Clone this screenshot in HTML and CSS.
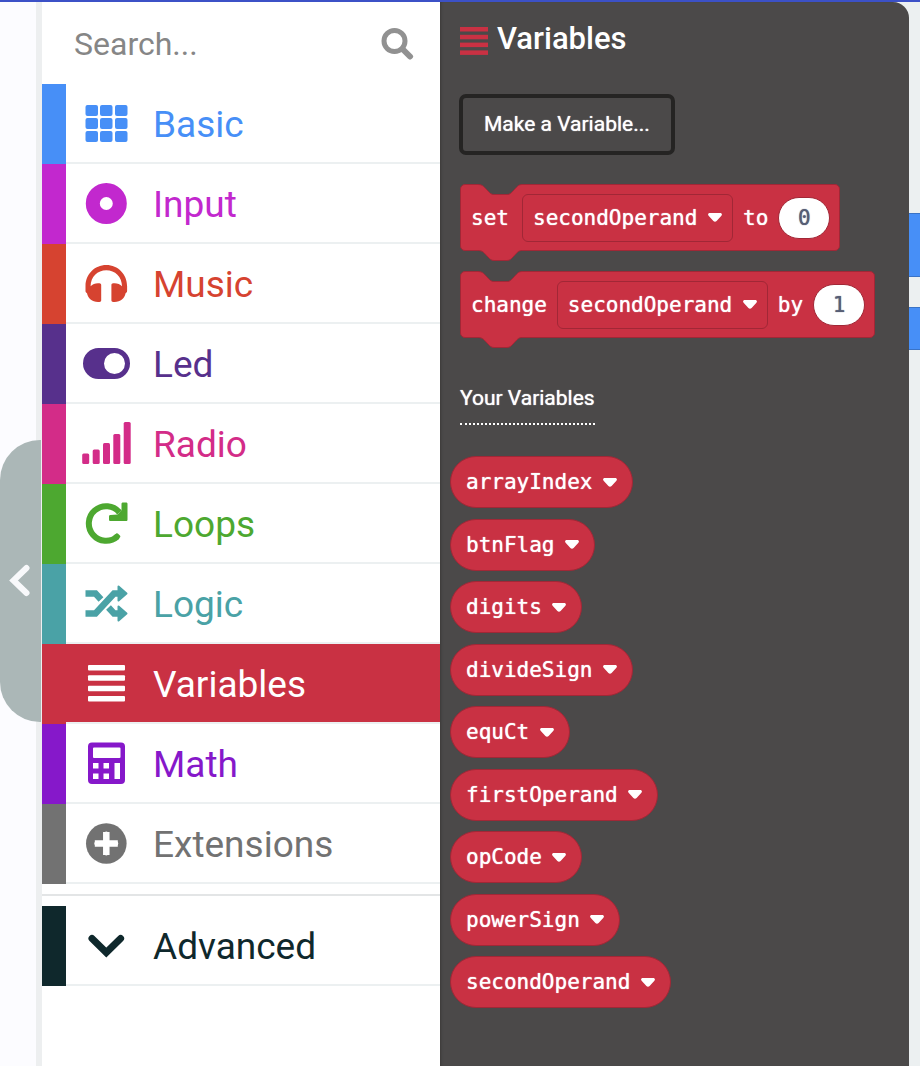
FILE: index.html
```html
<!DOCTYPE html>
<html lang="en">
<head>
<meta charset="utf-8">
<meta name="viewport" content="width=device-width, initial-scale=1">
<title>Block editor</title>
<link rel="stylesheet" href="styles.css">
</head>
<body>
<svg class="sprite" aria-hidden="true">
  <symbol id="caret" viewBox="0 0 14 9"><path d="M1.8 0h10.4c1.6 0 2.3 1.6 1.2 2.7L8.6 8c-.9.9-2.300.9-3.200 0L.6 2.700C-.5 1.600.2 0 1.800 0z"/></symbol>
  <symbol id="notch" viewBox="0 0 48 11"><path class="notch-fill" d="M0 .5h2C7 .5 8 3 12 7c2 2 3 3.500 6 3.500h13c3 0 4-1.500 6-3.500 4-4 5-6.500 9-6.500h2V0H0z"/><path class="notch-line" d="M0 .5h2C7 .5 8 3 12 7c2 2 3 3.500 6 3.500h13c3 0 4-1.500 6-3.500 4-4 5-6.500 9-6.500h2"/></symbol>
</svg>
<div class="app">
  <aside class="simulator">
    <button class="collapse" type="button" aria-label="Collapse simulator">
      <svg width="22" height="34" viewBox="0 0 22 34"><path d="M18.500 4L5.500 16.500l13 12.500"/></svg>
    </button>
  </aside>

  <nav class="toolbox" aria-label="Toolbox">
    <div class="search">
      <input type="search" placeholder="Search..." aria-label="Search">
      <button type="button" aria-label="Run search">
        <svg width="34" height="34" viewBox="0 0 34 34"><circle cx="14.500" cy="14" r="10.500" fill="none" stroke="currentColor" stroke-width="5"/><path d="M22.500 22l7.500 7.500" stroke="currentColor" stroke-width="6" stroke-linecap="round"/></svg>
      </button>
    </div>
    <ul class="categories">
      <li><button class="category basic" type="button"><span class="row">
        <svg class="icon" viewBox="0 0 50 50"><g fill="currentColor"><rect x="4.500" y="6" width="12.500" height="11" rx="2"/><rect x="19" y="6" width="12.500" height="11" rx="2"/><rect x="34" y="6" width="12.500" height="11" rx="2"/><rect x="4.500" y="19" width="12.500" height="11" rx="2"/><rect x="19" y="19" width="12.500" height="11" rx="2"/><rect x="34" y="19" width="12.500" height="11" rx="2"/><rect x="4.500" y="32" width="12.500" height="11" rx="2"/><rect x="19" y="32" width="12.500" height="11" rx="2"/><rect x="34" y="32" width="12.500" height="11" rx="2"/></g></svg>
        Basic</span></button></li>
      <li><button class="category input" type="button"><span class="row">
        <svg class="icon" viewBox="0 0 50 50"><circle cx="25.300" cy="24.500" r="13.500" fill="none" stroke="currentColor" stroke-width="14"/></svg>
        Input</span></button></li>
      <li><button class="category music" type="button"><span class="row">
        <svg class="icon" viewBox="0 0 50 50"><path fill="currentColor" d="M25.300 6C13.500 6 4.500 15.500 4.500 27v5c0 1 .6 1.700 1.500 2.200C7 39 11 43 17 43h1.500c1 0 1.700-.8 1.700-1.700V26c0-1-.8-1.700-1.700-1.700H17c-3 0-5.500 1-7.400 3C9.600 18 16.500 11.300 25.300 11.300S41 18 41 27.300c-1.900-2-4.400-3-7.400-3h-1.500c-1 0-1.700.8-1.700 1.700v15.300c0 1 .8 1.700 1.700 1.700h1.500c6 0 10-4 11-8.800.9-.5 1.500-1.200 1.500-2.200v-5C46.100 15.500 37.100 6 25.300 6z"/></svg>
        Music</span></button></li>
      <li><button class="category led" type="button"><span class="row">
        <svg class="icon" viewBox="0 0 50 50"><path fill="currentColor" fill-rule="evenodd" d="M17.500 9h16a15.500 15.500 0 0 1 0 31h-16a15.500 15.500 0 0 1 0-31zM33.500 14a10.500 10.500 0 1 0 0 21 10.500 10.500 0 0 0 0-21z"/></svg>
        Led</span></button></li>
      <li><button class="category radio" type="button"><span class="row">
        <svg class="icon" viewBox="0 0 50 50"><g fill="currentColor"><rect x="1.200" y="34.500" width="7" height="10.500" rx="1.500"/><rect x="11.700" y="30.500" width="7" height="14.500" rx="1.500"/><rect x="22" y="24" width="7" height="21" rx="1.500"/><rect x="32.300" y="15" width="7" height="30" rx="1.500"/><rect x="42.700" y="3" width="7" height="42" rx="1.500"/></g></svg>
        Radio</span></button></li>
      <li><button class="category loops" type="button"><span class="row">
        <svg class="icon" viewBox="0 0 50 50"><path d="M38.500 13.500A17.300 17.300 0 1 0 36.500 37.500" fill="none" stroke="currentColor" stroke-width="6"/><path fill="currentColor" d="M42 3.500h3c1 0 1.500.5 1.500 1.500v15.500c0 1-.5 1.500-1.500 1.500H29.500c-1 0-1.500-.5-1.500-1.500v-3c0-1 .5-1.500 1.500-1.500l7-.5 4-4V5c0-1 .5-1.500 1.500-1.500zM35 34.700c.7-.7 1.500-.6 2.100 0l1.800 1.800c.6.6.6 1.400 0 2.100l-2 1.900-4.500-4z"/></svg>
        Loops</span></button></li>
      <li><button class="category logic" type="button"><span class="row">
        <svg class="icon" viewBox="0 0 50 50"><g fill="none" stroke="currentColor" stroke-width="6.500"><path d="M4.500 34.500h10L33 14.500h5"/><path d="M4.500 14.500h10L20 20.500"/><path d="M27.500 28.500l5.500 6h5"/></g><path fill="currentColor" stroke="currentColor" stroke-width="2" stroke-linejoin="round" d="M37.500 7.500l8 7-8 7zM37.500 27.500l8 7-8 7z"/></svg>
        Logic</span></button></li>
      <li><button class="category variables" type="button" aria-current="true"><span class="row">
        <svg class="icon" viewBox="0 0 50 50"><g fill="currentColor"><rect x="7" y="6" width="37" height="5.500" rx="1"/><rect x="7" y="16.300" width="37" height="5.500" rx="1"/><rect x="7" y="26.700" width="37" height="5.500" rx="1"/><rect x="7" y="37" width="37" height="5.500" rx="1"/></g></svg>
        Variables</span></button></li>
      <li><button class="category math" type="button"><span class="row">
        <svg class="icon" viewBox="0 0 50 50"><path fill="currentColor" fill-rule="evenodd" d="M11 3.500h29a4 4 0 0 1 4 4V41a4 4 0 0 1-4 4H11a4 4 0 0 1-4-4V7.500a4 4 0 0 1 4-4zM13 8.500q-1 0-1 1v8.500q0 1 1 1h25.500q1 0 1-1V9.500q0-1-1-1zM12 24v5.500h5.500V24zM22.500 24v5.500H28V24zM12 34.500V40h5.500v-5.500zM22.500 34.500V40H28v-5.500zM33.500 24v16h5.500V24z"/></svg>
        Math</span></button></li>
      <li><button class="category extensions" type="button"><span class="row">
        <svg class="icon" viewBox="0 0 50 50"><circle cx="25.300" cy="24.500" r="20.300" fill="currentColor"/><path d="M25.300 14.500v20M15.300 24.500h20" stroke="#fff" stroke-width="4" stroke-linecap="round"/><path d="M25.300 13v23M13.800 24.500h23" stroke="#fff" stroke-width="6.500"/></svg>
        Extensions</span></button></li>
    </ul>
    <div class="more">
      <button class="category advanced" type="button" aria-expanded="false"><span class="row">
        <svg class="icon" viewBox="0 0 50 50"><path d="M11 17.500l14.300 14L39.600 17.500" fill="none" stroke="currentColor" stroke-width="7" stroke-linecap="round"/></svg>
        Advanced</span></button>
    </div>
  </nav>

  <main class="flyout">
    <h1 class="title">
      <svg width="28" height="28" viewBox="0 0 28 28"><g fill="currentColor"><rect y="0" width="28" height="4.500"/><rect y="7.800" width="28" height="4.500"/><rect y="15.600" width="28" height="4.500"/><rect y="23.400" width="28" height="4.500"/></g></svg>
      Variables
    </h1>
    <button class="make" type="button">Make a Variable...</button>

    <div class="block">
      <svg class="notch" aria-hidden="true"><use href="#notch"/></svg>
      <span class="word">set</span>
      <span class="dropdown field"><select aria-label="Variable to set"><option>secondOperand</option></select><svg class="caret"><use href="#caret"/></svg></span>
      <span>to</span>
      <input class="number" type="text" value="0" aria-label="Value">
      <svg class="notch tab" aria-hidden="true"><use href="#notch"/></svg>
    </div>
    <div class="block">
      <svg class="notch" aria-hidden="true"><use href="#notch"/></svg>
      <span class="word">change</span>
      <span class="dropdown field"><select aria-label="Variable to change"><option>secondOperand</option></select><svg class="caret"><use href="#caret"/></svg></span>
      <span>by</span>
      <input class="number" type="text" value="1" aria-label="Amount">
      <svg class="notch tab" aria-hidden="true"><use href="#notch"/></svg>
    </div>

    <h2 class="subtitle">Your Variables</h2>
    <ul class="variable-list">
      <li class="dropdown pill"><select aria-label="arrayIndex"><option>arrayIndex</option></select><svg class="caret"><use href="#caret"/></svg></li>
      <li class="dropdown pill"><select aria-label="btnFlag"><option>btnFlag</option></select><svg class="caret"><use href="#caret"/></svg></li>
      <li class="dropdown pill"><select aria-label="digits"><option>digits</option></select><svg class="caret"><use href="#caret"/></svg></li>
      <li class="dropdown pill"><select aria-label="divideSign"><option>divideSign</option></select><svg class="caret"><use href="#caret"/></svg></li>
      <li class="dropdown pill"><select aria-label="equCt"><option>equCt</option></select><svg class="caret"><use href="#caret"/></svg></li>
      <li class="dropdown pill"><select aria-label="firstOperand"><option>firstOperand</option></select><svg class="caret"><use href="#caret"/></svg></li>
      <li class="dropdown pill"><select aria-label="opCode"><option>opCode</option></select><svg class="caret"><use href="#caret"/></svg></li>
      <li class="dropdown pill"><select aria-label="powerSign"><option>powerSign</option></select><svg class="caret"><use href="#caret"/></svg></li>
      <li class="dropdown pill"><select aria-label="secondOperand"><option>secondOperand</option></select><svg class="caret"><use href="#caret"/></svg></li>
    </ul>
  </main>

  <div class="workspace">
    <div class="canvas-block tall"></div>
    <div class="canvas-block"></div>
  </div>
</div>
</body>
</html>
```
FILE: styles.css
```css
* {
  box-sizing: border-box;
}

body {
  margin: 0;
  font-family: Roboto, "Liberation Sans", sans-serif;
  background: #ecf0f1;
}

ul {
  margin: 0;
  padding: 0;
  list-style: none;
}

button,
input,
select {
  margin: 0;
  font: inherit;
  color: inherit;
}

.sprite {
  position: absolute;
  width: 0;
  height: 0;
}

.app {
  display: grid;
  grid-template-columns: 42px 398px 1fr 11px;
  min-height: 100vh;
  border-top: 2px solid #3c51c7;
}

/* Simulator edge */
.simulator {
  position: relative;
  background: #fcfcff;
  border-right: 6px solid #edeff0;
}

.collapse {
  position: absolute;
  top: 438px;
  left: 0;
  display: flex;
  align-items: center;
  width: 41px;
  height: 282px;
  padding: 0 8px;
  border: 0;
  border-radius: 40px 0 0 40px;
  background: #abb7b7;
}

.collapse svg {
  flex: none;
  fill: none;
  stroke: #f8f9fb;
  stroke-width: 6;
  stroke-linecap: round;
}

/* Toolbox */
.toolbox {
  background: #fff;
}

.search {
  display: flex;
  align-items: center;
  height: 82px;
  padding: 2px 26px 0 32px;
}

.search input {
  flex: 1;
  min-width: 0;
  padding: 0;
  border: 0;
  outline: 0;
  background: none;
  font-size: 32px;
  line-height: 40px;
  color: #333;
}

.search input::placeholder {
  color: #868686;
  opacity: 1;
}

.search button {
  display: flex;
  padding: 0;
  border: 0;
  background: none;
  color: #919191;
}

.category {
  display: block;
  width: 100%;
  height: 80px;
  padding: 0 0 0 24px;
  border: 0;
  background: linear-gradient(var(--tint), var(--tint)) left / 24px 100% no-repeat;
  color: var(--tint);
  font-size: 37px;
  text-align: left;
}

.row {
  display: flex;
  align-items: center;
  gap: 22px;
  height: 80px;
  padding: 2px 0 0 15px;
  border-bottom: 2px solid #ecf0f1;
}

.icon {
  width: 50px;
  height: 50px;
}

.basic { --tint: #478ff7; }
.input { --tint: #c228ce; }
.music { --tint: #d64330; }
.led { --tint: #57308c; }
.radio { --tint: #d32c88; }
.loops { --tint: #4da830; }
.logic { --tint: #4aa2a6; }
.variables { --tint: #c93143; }
.math { --tint: #8618ca; }
.extensions { --tint: #727272; }
.advanced { --tint: #0f282c; }

.category[aria-current="true"] .row {
  background: var(--tint) padding-box;
  color: #fff;
}

.more {
  margin-top: 10px;
  padding-top: 10px;
  border-top: 2px solid #e3e5e6;
}

/* Flyout */
.flyout {
  display: flex;
  flex-direction: column;
  align-items: flex-start;
  padding: 17px 20px 56px;
  border-top-right-radius: 16px;
  background: #4b4949;
  box-shadow: inset 3px 0 3px -2px #3c3a39;
  color: #fff;
}

.title {
  display: flex;
  align-items: center;
  gap: 9px;
  margin: 0;
  font-size: 31px;
  line-height: 40px;
  font-weight: 500;
}

.title svg {
  margin-top: 4px;
  color: #c93143;
}

.make {
  margin: 35px 0 29px -1px;
  padding: 0 21px;
  border: 4px solid #252423;
  border-radius: 7px;
  background: none;
  font-size: 21px;
  line-height: 53px;
}

.make,
.subtitle,
.block,
.dropdown,
.dropdown select,
.number {
  text-shadow: 0 0 1px currentColor;
}

.block {
  position: relative;
  display: flex;
  align-items: center;
  gap: 10px;
  height: 67px;
  margin-bottom: 20px;
  padding: 0 9px 0 10px;
  border: 1px solid #a12736;
  border-radius: 5px;
  background: #c93143;
}

.block,
.dropdown {
  font-family: "DejaVu Sans Mono", monospace;
  font-size: 21px;
}

.word {
  min-width: 41px;
}

.notch {
  position: absolute;
  top: -1px;
  left: 15px;
  width: 48px;
  height: 11px;
  color: #4b4949;
}

.tab {
  top: auto;
  bottom: -11px;
  color: #c93143;
}

.notch-fill {
  fill: currentColor;
}

.notch-line {
  fill: none;
  stroke: #a12736;
}

.dropdown {
  display: grid;
  align-items: center;
  border: 1px solid #a12736;
}

.dropdown select,
.dropdown .caret {
  grid-area: 1 / 1;
}

.dropdown select {
  height: 100%;
  padding: 0 34px 0 10px;
  border: 0;
  outline: 0;
  background: none;
  appearance: none;
}

.caret {
  justify-self: end;
  width: 14px;
  height: 9px;
  margin-right: 10px;
  fill: #fff;
  pointer-events: none;
}

.field {
  height: 48px;
  border-radius: 6px;
}

.number {
  width: 52px;
  height: 42px;
  padding: 0;
  border: 1px solid #a12736;
  border-radius: 21px;
  background: #fff;
  color: #575e75;
  text-align: center;
}

.subtitle {
  margin: 24px 0 31px;
  padding-bottom: 9px;
  border-bottom: 2px dotted #fff;
  font-size: 21px;
  line-height: 32px;
  font-weight: 400;
}

.variable-list {
  display: flex;
  flex-direction: column;
  justify-content: space-between;
  align-items: flex-start;
  min-height: 552px;
  margin-left: -10px;
}

.pill {
  height: 52px;
  border-radius: 26px;
  background: #c93143;
}

.pill select {
  padding: 0 39px 0 15px;
}

.pill .caret {
  margin-right: 15px;
}

/* Workspace */
.workspace {
  display: flex;
  flex-direction: column;
  gap: 30px;
  padding-top: 211px;
}

.canvas-block {
  height: 43px;
  border: solid #3a73c6;
  border-width: 1px 0;
  background: #478ff7;
}

.tall {
  height: 64px;
}
```
